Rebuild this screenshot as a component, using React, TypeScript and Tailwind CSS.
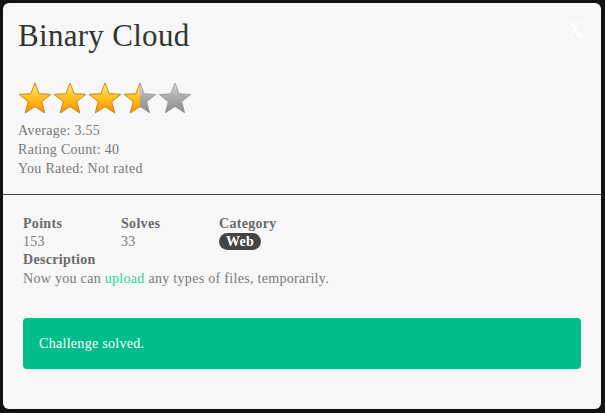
import React from 'react';

const serif = { fontFamily: '"Liberation Serif", "DejaVu Serif", serif' };

function Star({ fill, id }: { fill: number; id: string }) {
  // fill: 0..1 share of the star drawn gold
  const pts = [];
  for (let i = 0; i < 10; i++) {
    const r = i % 2 === 0 ? 16.5 : 7;
    const a = -Math.PI / 2 + (i * Math.PI) / 5;
    pts.push(`${(17 + r * Math.cos(a)).toFixed(2)},${(17.5 + r * Math.sin(a)).toFixed(2)}`);
  }
  const poly = pts.join(' ');
  return (
    <svg width="34" height="32" viewBox="0 0 34 32">
      <defs>
        <linearGradient id={`g-${id}`} x1="0" y1="0" x2="0" y2="1">
          <stop offset="0" stopColor="#ffe784" />
          <stop offset="0.45" stopColor="#ffc524" />
          <stop offset="1" stopColor="#ff9000" />
        </linearGradient>
        <linearGradient id={`s-${id}`} x1="0" y1="0" x2="0" y2="1">
          <stop offset="0" stopColor="#dedede" />
          <stop offset="0.45" stopColor="#adadad" />
          <stop offset="1" stopColor="#8a8a8a" />
        </linearGradient>
        <clipPath id={`c-${id}`}>
          <rect x="0" y="0" width={34 * fill} height="34" />
        </clipPath>
      </defs>
      <polygon points={poly} fill={`url(#s-${id})`} stroke="#929292" strokeWidth="0.8" strokeLinejoin="round" />
      {fill > 0 && (
        <polygon
          points={poly}
          fill={`url(#g-${id})`}
          stroke="#d58600"
          strokeWidth="0.8"
          strokeLinejoin="round"
          clipPath={`url(#c-${id})`}
        />
      )}
    </svg>
  );
}

export default function App() {
  const stars = [1, 1, 1, 0.5, 0];

  return (
    <div className="flex h-[413px] w-[605px] bg-[#101312] pt-[3px] pb-[4px] pl-[3px] pr-[4px]" style={serif}>
      <div className="relative flex w-full flex-col rounded-[6px] bg-[#f7f7f7]">
        <button className="absolute right-[17px] top-[14px] text-[24px] leading-none text-white">X</button>

        <div className="px-[15px] pt-[14px] pb-[16px]">
          <h1 className="text-[31px] leading-[38px] tracking-[0.3px] text-[#333]">Binary Cloud</h1>
          <div className="mt-[27px] flex gap-[1px]">
            {stars.map((f, i) => (
              <Star key={i} fill={f} id={`st${i}`} />
            ))}
          </div>
          <div className="mt-[7px] text-[14px] leading-[19px] tracking-[0.3px] text-[#777]">
            <div>Average: 3.55</div>
            <div>Rating Count: 40</div>
            <div>You Rated: Not rated</div>
          </div>
        </div>

        <div className="border-t border-[#444]" />

        <div className="px-[20px] pt-[20px] tracking-[0.3px]">
          <div className="grid grid-cols-[98px_98px_1fr] text-[14px] leading-[18px] text-[#777]">
            <div className="font-bold text-[#6a6a6a]">Points</div>
            <div className="font-bold text-[#6a6a6a]">Solves</div>
            <div className="font-bold text-[#6a6a6a]">Category</div>
            <div>153</div>
            <div>33</div>
            <div>
              <span className="inline-block rounded-full bg-[#444] px-[7px] text-[14px] font-bold leading-[17px] text-white">
                Web
              </span>
            </div>
          </div>
          <div className="text-[14px] leading-[18px] font-bold text-[#6a6a6a]">Description</div>
          <p className="text-[14px] leading-[19px] text-[#777]">
            Now you can <a className="text-[#1ed6a3]">upload</a> any types of files, temporarily.
          </p>

          <div className="mt-[30px] flex h-[51px] items-center rounded-[4px] bg-[#00bd8c] px-[16px] text-[14px] text-white">
            Challenge solved.
          </div>
        </div>
      </div>
    </div>
  );
}
